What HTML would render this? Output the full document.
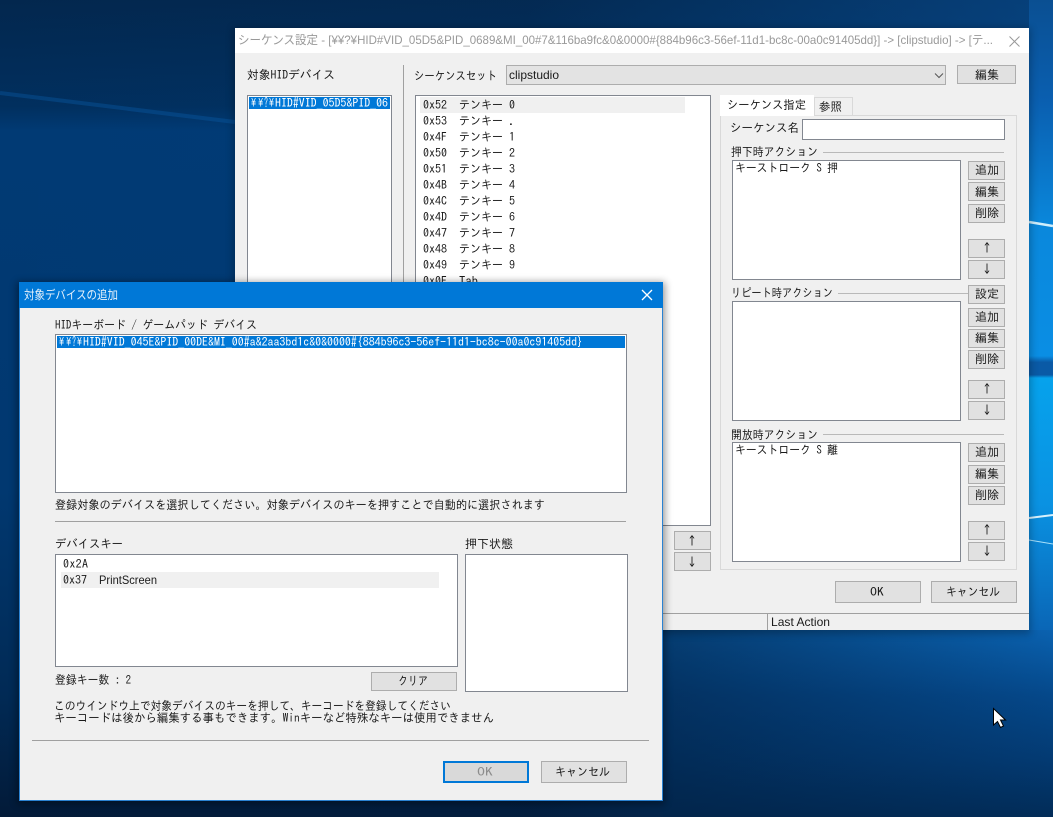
<!DOCTYPE html>
<html lang="ja"><head><meta charset="utf-8"><title>シーケンス設定</title>
<style>
html,body{margin:0;padding:0;width:1053px;height:817px;overflow:hidden;background:#02305f}
svg{display:block}
text{font-family:"IPAGothic","Noto Sans CJK JP",sans-serif;font-size:12px;fill:#1a1a1a;white-space:pre}
.ti{font-family:"Liberation Sans","Noto Sans CJK JP",sans-serif;font-size:12px;fill:#999}
.p{font-family:"Liberation Sans",sans-serif;font-size:12px}
.b{fill:#e1e1e1;stroke:#adadad}
.l{fill:#fff;stroke:#828790}
.c{text-anchor:middle}
</style></head><body>
<svg width="1053" height="817" viewBox="0 0 1053 817" xmlns="http://www.w3.org/2000/svg">
<defs>
<linearGradient id="bg" x1="0" y1="0" x2="0" y2="1"><stop offset="0" stop-color="#03274e"/><stop offset=".13" stop-color="#012f5e"/><stop offset=".16" stop-color="#013a74"/><stop offset=".6" stop-color="#013870"/><stop offset=".85" stop-color="#012a55"/><stop offset="1" stop-color="#021a38"/></linearGradient>
<linearGradient id="ov" x1="0" y1="0" x2="1" y2="0"><stop offset="0" stop-color="#0a5aa8" stop-opacity="0"/><stop offset=".5" stop-color="#0a5aa8" stop-opacity=".05"/><stop offset="1" stop-color="#0a5aa8" stop-opacity=".5"/></linearGradient>
<linearGradient id="rs" x1="0" y1="0" x2="0" y2="1"><stop offset="0" stop-color="#0a4f92"/><stop offset=".16" stop-color="#0a5fb0"/><stop offset=".36" stop-color="#0a88dc"/><stop offset=".565" stop-color="#0a8ee4"/><stop offset=".575" stop-color="#0a5aa6"/><stop offset=".595" stop-color="#0a5aa6"/><stop offset=".6" stop-color="#06a2ec"/><stop offset=".8" stop-color="#0a92e2"/><stop offset="1" stop-color="#0a66b6"/></linearGradient>
<linearGradient id="bw" x1="0" y1="0" x2="0" y2="1"><stop offset="0" stop-color="#0a62b0"/><stop offset=".35" stop-color="#05488a"/><stop offset=".7" stop-color="#033a72"/><stop offset="1" stop-color="#022c58"/></linearGradient>
<linearGradient id="bw2" x1="0" y1="0" x2="1" y2="0"><stop offset="0" stop-color="#021f40"/><stop offset="1" stop-color="#021f40" stop-opacity="0"/></linearGradient>
<filter id="sh" x="-5%" y="-5%" width="110%" height="110%"><feGaussianBlur stdDeviation="4"/></filter>
</defs>

<!-- desktop -->
<rect width="1053" height="817" fill="url(#bg)"/>
<rect width="1053" height="817" fill="url(#ov)"/>
<rect x="663" y="630" width="390" height="187" fill="url(#bw)"/>
<rect x="663" y="630" width="390" height="187" fill="url(#bw2)" opacity=".55"/>
<rect x="1029" y="0" width="24" height="630" fill="url(#rs)"/>
<path d="M0 93L235 122" stroke="#0a5aa5" stroke-width="4" opacity=".4" fill="none"/>
<path d="M1029 222L1053 226" stroke="#cfeefc" stroke-width="2.500" fill="none"/>
<path d="M1029 518L1053 515" stroke="#d7f1fd" stroke-width="2" fill="none"/>
<path d="M1029 540L1053 544" stroke="#a8e0fa" stroke-width="1" fill="none"/>

<!-- main window -->
<rect x="233" y="28" width="798" height="606" fill="#000" opacity=".25" filter="url(#sh)"/>
<rect x="235" y="28" width="794" height="602" fill="#f0f0f0"/>
<rect x="235" y="28" width="794" height="25" fill="#fff"/>
<text class="ti" x="238" y="44" textLength="755" lengthAdjust="spacingAndGlyphs">シーケンス設定 - [¥¥?¥HID#VID_05D5&amp;PID_0689&amp;MI_00#7&amp;116ba9fc&amp;0&amp;0000#{884b96c3-56ef-11d1-bc8c-00a0c91405dd}] -&gt; [clipstudio] -&gt; [テ...</text>
<path d="M1009.500 36.500L1019.500 46.500M1019.500 36.500L1009.500 46.500" stroke="#999" fill="none"/>

<text x="247" y="79" textLength="88" lengthAdjust="spacingAndGlyphs">対象HIDデバイス</text>
<rect class="l" x="247.500" y="95.500" width="144" height="200"/>
<rect x="249" y="97" width="141" height="12" fill="#0078d7"/>
<text x="250" y="107" textLength="25" lengthAdjust="spacingAndGlyphs" style="fill:#fff">¥¥?¥</text>
<text x="275" y="107" textLength="113" lengthAdjust="spacingAndGlyphs" style="fill:#fff">HID#VID_05D5&amp;PID_06</text>
<rect x="403" y="65" width="1" height="220" fill="#a0a0a0"/>

<text x="414" y="80" textLength="83" lengthAdjust="spacingAndGlyphs">シーケンスセット</text>
<rect class="b" x="506.500" y="65.500" width="439" height="19" style="fill:#e3e3e3"/>
<text class="p" x="509" y="79" textLength="50" lengthAdjust="spacingAndGlyphs">clipstudio</text>
<path d="M935 73.500L939 77.500L943 73.500" stroke="#555" fill="none"/>
<rect class="b" x="957.500" y="65.500" width="58" height="18"/>
<text class="c" x="987" y="79">編集</text>

<!-- sequence list -->
<rect class="l" x="415.500" y="95.500" width="295" height="430"/>
<rect x="420" y="97" width="265" height="16" fill="#f0f0f0"/>
<g>
<text x="423" y="109" textLength="24">0x52</text><text x="459" y="109" textLength="44" lengthAdjust="spacingAndGlyphs">テンキー</text><text x="509" y="109">0</text>
<text x="423" y="125" textLength="24">0x53</text><text x="459" y="125" textLength="44" lengthAdjust="spacingAndGlyphs">テンキー</text><text x="509" y="125">.</text>
<text x="423" y="141" textLength="24">0x4F</text><text x="459" y="141" textLength="44" lengthAdjust="spacingAndGlyphs">テンキー</text><text x="509" y="141">1</text>
<text x="423" y="157" textLength="24">0x50</text><text x="459" y="157" textLength="44" lengthAdjust="spacingAndGlyphs">テンキー</text><text x="509" y="157">2</text>
<text x="423" y="173" textLength="24">0x51</text><text x="459" y="173" textLength="44" lengthAdjust="spacingAndGlyphs">テンキー</text><text x="509" y="173">3</text>
<text x="423" y="189" textLength="24">0x4B</text><text x="459" y="189" textLength="44" lengthAdjust="spacingAndGlyphs">テンキー</text><text x="509" y="189">4</text>
<text x="423" y="205" textLength="24">0x4C</text><text x="459" y="205" textLength="44" lengthAdjust="spacingAndGlyphs">テンキー</text><text x="509" y="205">5</text>
<text x="423" y="221" textLength="24">0x4D</text><text x="459" y="221" textLength="44" lengthAdjust="spacingAndGlyphs">テンキー</text><text x="509" y="221">6</text>
<text x="423" y="237" textLength="24">0x47</text><text x="459" y="237" textLength="44" lengthAdjust="spacingAndGlyphs">テンキー</text><text x="509" y="237">7</text>
<text x="423" y="253" textLength="24">0x48</text><text x="459" y="253" textLength="44" lengthAdjust="spacingAndGlyphs">テンキー</text><text x="509" y="253">8</text>
<text x="423" y="269" textLength="24">0x49</text><text x="459" y="269" textLength="44" lengthAdjust="spacingAndGlyphs">テンキー</text><text x="509" y="269">9</text>
<text x="423" y="285" textLength="24">0x0F</text><text x="459" y="285" textLength="19" lengthAdjust="spacingAndGlyphs">Tab</text>
</g>
<rect class="b" x="674.500" y="531.500" width="36" height="18"/><text class="c" x="692" y="545">↑</text>
<rect class="b" x="674.500" y="552.500" width="36" height="18"/><text class="c" x="692" y="566">↓</text>

<!-- tabs -->
<rect x="720.500" y="115.500" width="296" height="454" fill="#f0f0f0" stroke="#d9d9d9"/>
<rect x="814.500" y="97.500" width="38" height="18" fill="#f0f0f0" stroke="#d9d9d9"/>
<rect x="720" y="95" width="94" height="21" fill="#fff"/>
<text x="727" y="109" textLength="79" lengthAdjust="spacingAndGlyphs">シーケンス指定</text>
<text x="819" y="111" textLength="23" lengthAdjust="spacingAndGlyphs">参照</text>
<text x="730" y="132" textLength="69" lengthAdjust="spacingAndGlyphs">シーケンス名</text>
<rect class="l" x="802.500" y="119.500" width="202" height="20"/>

<text x="731" y="156" textLength="87" lengthAdjust="spacingAndGlyphs">押下時アクション</text>
<rect x="823" y="152" width="181" height="1" fill="#b9b9b9"/>
<rect class="l" x="732.500" y="160.500" width="228" height="119"/>
<text x="735" y="172" textLength="103" lengthAdjust="spacingAndGlyphs">キーストローク S 押</text>
<rect class="b" x="968.500" y="161.500" width="36" height="18"/><text class="c" x="987" y="174">追加</text>
<rect class="b" x="968.500" y="182.500" width="36" height="18"/><text class="c" x="987" y="196">編集</text>
<rect class="b" x="968.500" y="204.500" width="36" height="18"/><text class="c" x="987" y="217">削除</text>
<rect class="b" x="968.500" y="239.500" width="36" height="18"/><text class="c" x="987" y="252">↑</text>
<rect class="b" x="968.500" y="260.500" width="36" height="18"/><text class="c" x="987" y="273">↓</text>

<text x="731" y="297" textLength="102" lengthAdjust="spacingAndGlyphs">リピート時アクション</text>
<rect x="838" y="293" width="130" height="1" fill="#b9b9b9"/>
<rect class="b" x="968.500" y="285.500" width="36" height="18"/><text class="c" x="987" y="298">設定</text>
<rect class="l" x="732.500" y="301.500" width="228" height="119"/>
<rect class="b" x="968.500" y="308.500" width="36" height="18"/><text class="c" x="987" y="321">追加</text>
<rect class="b" x="968.500" y="329.500" width="36" height="18"/><text class="c" x="987" y="342">編集</text>
<rect class="b" x="968.500" y="350.500" width="36" height="18"/><text class="c" x="987" y="363">削除</text>
<rect class="b" x="968.500" y="380.500" width="36" height="18"/><text class="c" x="987" y="393">↑</text>
<rect class="b" x="968.500" y="401.500" width="36" height="18"/><text class="c" x="987" y="414">↓</text>

<text x="731" y="439" textLength="87" lengthAdjust="spacingAndGlyphs">開放時アクション</text>
<rect x="823" y="434" width="181" height="1" fill="#b9b9b9"/>
<rect class="l" x="732.500" y="442.500" width="228" height="119"/>
<text x="735" y="454" textLength="103" lengthAdjust="spacingAndGlyphs">キーストローク S 離</text>
<rect class="b" x="968.500" y="443.500" width="36" height="18"/><text class="c" x="987" y="456">追加</text>
<rect class="b" x="968.500" y="465.500" width="36" height="18"/><text class="c" x="987" y="478">編集</text>
<rect class="b" x="968.500" y="486.500" width="36" height="18"/><text class="c" x="987" y="499">削除</text>
<rect class="b" x="968.500" y="521.500" width="36" height="18"/><text class="c" x="987" y="534">↑</text>
<rect class="b" x="968.500" y="542.500" width="36" height="18"/><text class="c" x="987" y="555">↓</text>

<rect class="b" x="835.500" y="581.500" width="85" height="21"/><text x="870" y="596" textLength="14" lengthAdjust="spacingAndGlyphs">OK</text>
<rect class="b" x="931.500" y="581.500" width="85" height="21"/><text x="946" y="596" textLength="54" lengthAdjust="spacingAndGlyphs">キャンセル</text>
<rect x="235" y="613" width="794" height="1" fill="#a0a0a0"/>
<rect x="767" y="614" width="1" height="16" fill="#a0a0a0"/>
<text class="p" x="771" y="626" textLength="59" lengthAdjust="spacingAndGlyphs">Last Action</text>

<!-- dialog -->
<rect x="17" y="282" width="648" height="522" fill="#000" opacity=".4" filter="url(#sh)"/>
<rect x="19.500" y="282.500" width="643" height="518" fill="#f0f0f0" stroke="#2a82d2"/>
<rect x="19" y="282" width="644" height="26" fill="#0078d7"/>
<text class="ti" x="24" y="299" textLength="94" lengthAdjust="spacingAndGlyphs" style="fill:#e8f2fb">対象デバイスの追加</text>
<path d="M642 290L652 300M652 290L642 300" stroke="#fff" stroke-width="1.300" fill="none"/>

<text x="55" y="329" textLength="202" lengthAdjust="spacingAndGlyphs">HIDキーボード / ゲームパッド デバイス</text>
<rect class="l" x="55.500" y="334.500" width="571" height="158"/>
<rect x="57" y="336" width="568" height="12" fill="#0078d7"/>
<text x="58" y="346" textLength="25" lengthAdjust="spacingAndGlyphs" style="fill:#fff">¥¥?¥</text>
<text x="83" y="346" textLength="500" lengthAdjust="spacingAndGlyphs" style="fill:#fff">HID#VID_045E&amp;PID_00DE&amp;MI_00#a&amp;2aa3bd1c&amp;0&amp;0000#{884b96c3-56ef-11d1-bc8c-00a0c91405dd}</text>
<text x="55" y="509" textLength="490" lengthAdjust="spacingAndGlyphs">登録対象のデバイスを選択してください。対象デバイスのキーを押すことで自動的に選択されます</text>
<rect x="55" y="521" width="571" height="1" fill="#a0a0a0"/>

<text x="55" y="548" textLength="68" lengthAdjust="spacingAndGlyphs">デバイスキー</text>
<rect class="l" x="55.500" y="554.500" width="402" height="112"/>
<rect x="61" y="572" width="378" height="16" fill="#f0f0f0"/>
<text x="63" y="568" textLength="25">0x2A</text>
<text x="63" y="584" textLength="24">0x37</text>
<text class="p" x="99" y="584" textLength="58" lengthAdjust="spacingAndGlyphs">PrintScreen</text>
<text x="465" y="548" textLength="48" lengthAdjust="spacingAndGlyphs">押下状態</text>
<rect class="l" x="465.500" y="554.500" width="162" height="137"/>
<text x="55" y="684" textLength="76" lengthAdjust="spacingAndGlyphs">登録キー数 : 2</text>
<rect class="b" x="371.500" y="672.500" width="85" height="18"/><text x="398" y="685" textLength="30" lengthAdjust="spacingAndGlyphs">クリア</text>
<text x="54" y="710" textLength="397" lengthAdjust="spacingAndGlyphs">このウインドウ上で対象デバイスのキーを押して、キーコードを登録してください</text>
<text x="54" y="722" textLength="440" lengthAdjust="spacingAndGlyphs">キーコードは後から編集する事もできます。Winキーなど特殊なキーは使用できません</text>
<rect x="32" y="740" width="617" height="1" fill="#a0a0a0"/>
<rect x="444" y="762" width="84" height="20" fill="#d9d9d9" stroke="#0078d7" stroke-width="2"/>
<text x="477" y="776" textLength="16" lengthAdjust="spacingAndGlyphs" style="fill:#8c8c8c">OK</text>
<rect class="b" x="541.500" y="761.500" width="85" height="21"/><text x="555" y="776" textLength="55" lengthAdjust="spacingAndGlyphs">キャンセル</text>

<!-- cursor -->
<path d="M993.500 708.500V725L997.500 721.500L1000.500 727.500L1003.500 726L1000.500 720H1005.500Z" fill="#fff" stroke="#000" stroke-width="1"/>
</svg>
</body></html>
